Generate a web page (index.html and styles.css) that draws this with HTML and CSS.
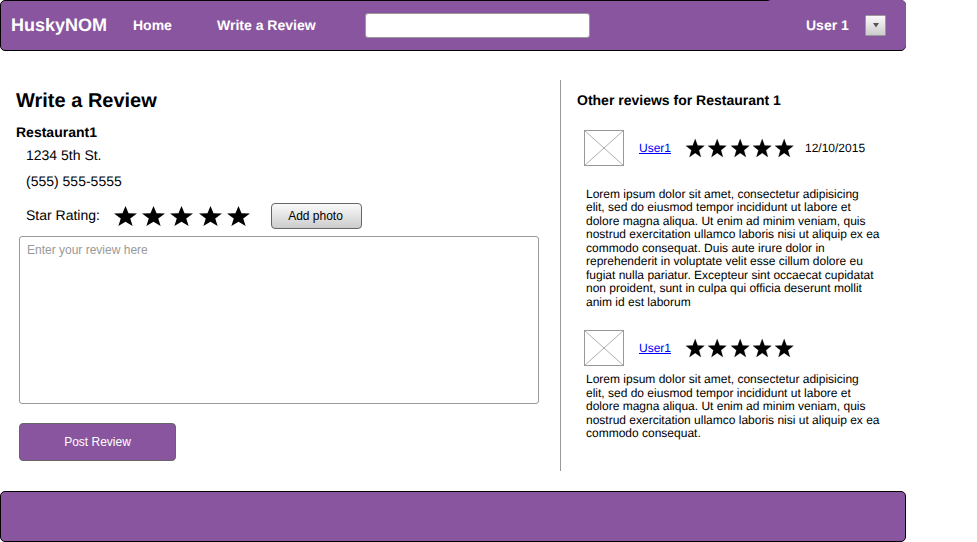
FILE: index.html
```html
<!DOCTYPE html>
<html lang="en">
<head>
<meta charset="utf-8">
<title>HuskyNOM - Write a Review</title>
<link rel="stylesheet" href="styles.css">
</head>
<body>
<svg class="defs" aria-hidden="true">
  <symbol id="star" viewBox="0 0 190 181" preserveAspectRatio="none" overflow="visible">
    <polygon points="95,0 120,66 190,69 134,113 154,181 95,142 36,181 56,113 0,69 70,66"/>
  </symbol>
  <symbol id="placeholder" viewBox="0 0 40 36">
    <rect x=".5" y=".5" width="39" height="35" fill="#fff" stroke="#999"/>
    <path d="M.5 .5L39.5 35.5M.5 35.5L39.5 .5" stroke="#999" stroke-width=".8" fill="none"/>
  </symbol>
</svg>
<div class="page">
  <header class="topbar">
    <a class="brand">HuskyNOM</a>
    <a class="nav home">Home</a>
    <a class="nav write">Write a Review</a>
    <input class="search" type="text" aria-label="Search">
    <div class="account">
      <span class="nav">User 1</span>
      <button class="dropdown" aria-label="Account menu"><svg width="6" height="5" viewBox="0 0 6 5"><path d="M0 0H6L3 4.6Z" fill="#555"/></svg></button>
    </div>
  </header>
  <main class="content">
    <section class="compose">
      <h1>Write a Review</h1>
      <h2>Restaurant1</h2>
      <p class="detail">1234 5th St.</p>
      <p class="detail">(555) 555-5555</p>
      <div class="rating">
        <span class="label">Star Rating:</span>
        <div class="stars large">
          <svg><use href="#star"/></svg><svg><use href="#star"/></svg><svg><use href="#star"/></svg><svg><use href="#star"/></svg><svg><use href="#star"/></svg>
        </div>
        <button class="photo">Add photo</button>
      </div>
      <textarea class="entry" placeholder="Enter your review here"></textarea>
      <button class="post">Post Review</button>
    </section>
    <aside class="others">
      <h3>Other reviews for Restaurant 1</h3>
      <article class="review first">
        <div class="meta">
          <svg class="avatar"><use href="#placeholder"/></svg>
          <a class="user" href="#">User1</a>
          <div class="stars small">
            <svg><use href="#star"/></svg><svg><use href="#star"/></svg><svg><use href="#star"/></svg><svg><use href="#star"/></svg><svg><use href="#star"/></svg>
          </div>
          <time>12/10/2015</time>
        </div>
        <p>Lorem ipsum dolor sit amet, consectetur adipisicing<br>elit, sed do eiusmod tempor incididunt ut labore et<br>dolore magna aliqua. Ut enim ad minim veniam, quis nostrud exercitation ullamco laboris nisi ut aliquip ex ea commodo consequat. Duis aute irure dolor in reprehenderit in voluptate velit esse cillum dolore eu fugiat nulla pariatur. Excepteur sint occaecat cupidatat non proident, sunt in culpa qui officia deserunt mollit anim id est laborum</p>
      </article>
      <article class="review">
        <div class="meta">
          <svg class="avatar"><use href="#placeholder"/></svg>
          <a class="user" href="#">User1</a>
          <div class="stars small">
            <svg><use href="#star"/></svg><svg><use href="#star"/></svg><svg><use href="#star"/></svg><svg><use href="#star"/></svg><svg><use href="#star"/></svg>
          </div>
        </div>
        <p>Lorem ipsum dolor sit amet, consectetur adipisicing<br>elit, sed do eiusmod tempor incididunt ut labore et<br>dolore magna aliqua. Ut enim ad minim veniam, quis nostrud exercitation ullamco laboris nisi ut aliquip ex ea commodo consequat.</p>
      </article>
    </aside>
  </main>
  <footer class="bottombar"></footer>
</div>
</body>
</html>
```
FILE: styles.css
```css
* { box-sizing: border-box; }
body {
  margin: 0;
  background: #fff;
  color: #000;
  font-family: "Liberation Sans", Arial, sans-serif;
  font-size: 12px;
  text-rendering: geometricPrecision;
}
h1, h2, h3, p { margin: 0; }
button, input, textarea { font: inherit; margin: 0; padding: 0; }
.defs { display: none; }
.page { width: 906px; height: 542px; display: flex; flex-direction: column; }

.topbar {
  height: 51px;
  display: flex;
  align-items: center;
  background: #89559f;
  border: 1px solid #000;
  border-radius: 5px;
  padding-left: 10px;
  color: #fff;
  font-weight: bold;
  white-space: nowrap;
}
.brand { font-size: 18px; line-height: 20px; width: 122px; padding-bottom: 1px; }
.nav { font-size: 14px; line-height: 16px; padding-bottom: 2px; }
.home { width: 84px; }
.write { width: 148px; }
.search {
  width: 225px;
  height: 25px;
  border: 1px solid #999;
  border-radius: 3px;
  background: #fff;
}
/* covers the bar's top and right borders */
.account {
  width: 140px;
  height: 50px;
  margin: -1px -1px 0 auto;
  padding: 1px 20px 0 40px;
  display: flex;
  align-items: center;
  justify-content: space-between;
  background: #89559f;
  border-radius: 5px;
}
.dropdown {
  width: 21px;
  height: 21px;
  display: flex;
  align-items: center;
  justify-content: center;
  border: 1px solid #999;
  border-radius: 1px;
  background: linear-gradient(#fafafa, #ccc);
}

.content { display: flex; height: 391px; margin-top: 29px; }
.compose { width: 560px; padding: 9px 0 0 16px; }
h1 { font-size: 20px; line-height: 24px; }
h2 { font-size: 14px; line-height: 16px; margin-top: 11px; }
.detail { font-size: 14px; line-height: 16px; margin: 7px 0 0 10px; }
.detail + .detail { margin-top: 10px; }
.rating { display: flex; align-items: center; height: 26px; margin: 14px 0 0 10px; }
.label { font-size: 14px; line-height: 16px; width: 88px; padding-bottom: 2px; }
.stars { display: flex; }
.stars.large { width: 157px; gap: 5.2px; }
.large svg { width: 23px; height: 20px; flex: none; }
.photo {
  width: 91px;
  height: 26px;
  padding-right: 2px;
  border: 1px solid #666;
  border-radius: 4px;
  background: linear-gradient(#fafafa, #ccc);
  color: #000;
}
.entry {
  display: block;
  width: 520px;
  height: 168px;
  margin: 7px 0 0 3px;
  padding: 6px 7px;
  border: 1px solid #999;
  border-radius: 3px;
  line-height: 14px;
  resize: none;
}
.entry::placeholder { color: #999; opacity: 1; }
.post {
  display: block;
  width: 157px;
  height: 38px;
  margin: 19px 0 0 3px;
  border: 1px solid #666;
  border-radius: 4px;
  background: #89559f;
  color: #fff;
}

.others { width: 346px; border-left: 1px solid #999; padding: 12px 0 0 16px; }
h3 { font-size: 14px; line-height: 16px; }
.review { margin-top: 21px; }
.review.first { margin-top: 22px; }
.meta { display: flex; align-items: center; height: 36px; padding-left: 7px; }
.avatar { width: 40px; height: 36px; margin-right: 15px; }
.user { width: 47px; line-height: 14px; color: #00f; }
.stars.small { width: 119px; gap: 3.9px; }
.small svg {
  width: 18.4px;
  height: 18px;
  flex: none;
  overflow: visible;
  stroke: rgba(0, 0, 0, .3);
  stroke-width: 8px;
}
.review p { width: 300px; margin: 7px 0 0 9px; line-height: 13.5px; }
.review.first p { margin-top: 21.5px; }

.bottombar {
  height: 51px;
  margin-top: 20px;
  background: #89559f;
  border: 1px solid #000;
  border-radius: 5px;
}
```
